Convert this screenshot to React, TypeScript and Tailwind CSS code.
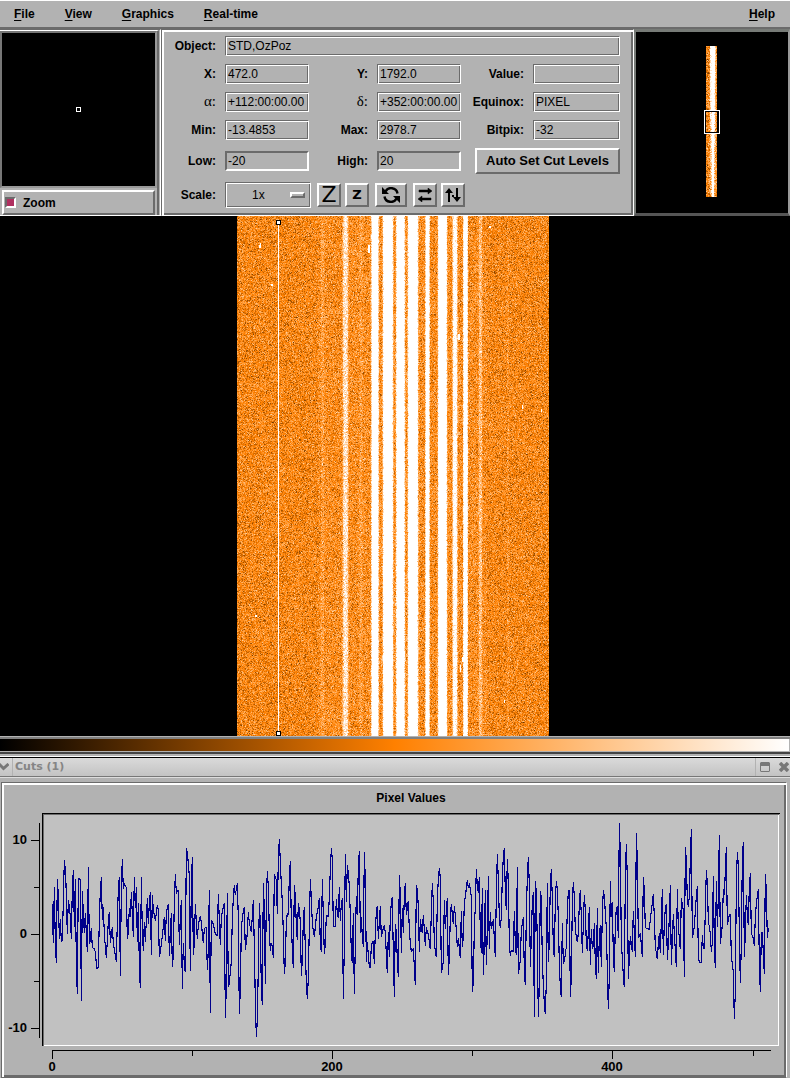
import { useLayoutEffect, useRef, type ReactNode } from "react";

// Motif style bevels
const GROOVE =
  "border border-t-[#6b6b6b] border-l-[#6b6b6b] border-b-white border-r-white shadow-[inset_1px_1px_0_#fff,inset_-1px_-1px_0_#6b6b6b]";
const SUNKEN = "border-2 border-t-[#6b6b6b] border-l-[#6b6b6b] border-b-white border-r-white";
const RAISED = "border-2 border-t-white border-l-white border-b-[#6b6b6b] border-r-[#6b6b6b]";

// center, half width and peak of every spectrum on the detector
const FIBRES = [
  [85.5, 1.5, 3],
  [108.5, 2.5, 15],
  [124, 1.5, 3],
  [138, 3, 45],
  [151, 4, 60],
  [163.5, 3.5, 50],
  [176, 4, 60],
  [190.5, 1.7, 45],
  [205.5, 3.5, 60],
  [218, 2.2, 22],
  [228.5, 1.7, 60],
  [243.5, 1.6, 8],
  [271, 1, 2],
];

// x, y, width, height
const COSMIC_RAYS = [
  [22, 29, 2, 3],
  [23, 27, 1, 3],
  [131, 29, 2, 8],
  [34, 68, 2, 2],
  [252, 10, 2, 2],
  [221, 118, 2, 6],
  [285, 189, 1, 4],
  [304, 193, 1, 3],
  [18, 399, 2, 2],
  [225, 441, 2, 5],
  [223, 449, 1, 7],
  [267, 484, 1, 3],
];

const makeRandom = (seed: number) => () => {
  seed = (seed * 1664525 + 1013904223) >>> 0;
  return seed / 4294967296;
};

const gauss = (random: () => number) => random() + random() + random() + random() - 2;

// Heat map, cut levels -20..20
const heat = (value: number) => {
  const t = Math.min(1, Math.max(0, (value + 20) / 40));
  if (t < 0.5) return [t * 510, t * 256, 0];
  return [255, 128 + (t - 0.5) * 254, (t - 0.5) * 510];
};

const paint = (
  ctx: CanvasRenderingContext2D,
  width: number,
  height: number,
  valueAt: (x: number, y: number) => number
) => {
  const image = ctx.createImageData(width, height);
  for (let y = 0; y < height; y++) {
    for (let x = 0; x < width; x++) {
      const [r, g, b] = heat(valueAt(x, y));
      image.data.set([r, g, b, 255], (y * width + x) * 4);
    }
  }
  ctx.putImageData(image, 0, 0);
};

const DetectorImage = () => {
  const ref = useRef<HTMLCanvasElement>(null);

  useLayoutEffect(() => {
    const ctx = ref.current?.getContext("2d");
    if (!ctx) return;
    const random = makeRandom(472);
    const profile = Array.from({ length: 312 }, (_, x) =>
      FIBRES.reduce((sum, [c, w, peak]) => sum + peak * Math.exp(-0.7 * (Math.abs(x + 0.5 - c) / w) ** 4), 0)
    );
    paint(ctx, 312, 520, (x) => {
      const sky = x > 80 && x < 250 ? 2 : 1;
      return sky + gauss(random) * 7 + profile[x] * (0.8 + random() * 0.4);
    });

    ctx.fillStyle = "#fff";
    COSMIC_RAYS.forEach(([x, y, w, h]) => ctx.fillRect(x, y, w, h));

    // Cut line with its two handles
    ctx.fillRect(41, 7, 1, 510);
    [4, 515].forEach((y) => {
      ctx.fillStyle = "#000";
      ctx.fillRect(39, y, 5, 5);
      ctx.fillStyle = "#fff";
      ctx.fillRect(40, y + 1, 3, 3);
    });
  }, []);

  return <canvas ref={ref} width={312} height={520} className="block" />;
};

const PanImage = () => {
  const ref = useRef<HTMLCanvasElement>(null);

  useLayoutEffect(() => {
    const ctx = ref.current?.getContext("2d");
    if (!ctx) return;
    const random = makeRandom(1792);
    paint(ctx, 11, 151, (x, y) => {
      const fade = y / 151;
      const bright = [0, 0, 0, 2, 20 - fade * 15, 24 - fade * 14, 40, 40, 26 - fade * 18, 9 - fade * 5, 2];
      return 1 + bright[x] + gauss(random) * 8;
    });
  }, []);

  return <canvas ref={ref} width={11} height={151} className="block" />;
};

interface FieldProps {
  id: string;
  label: string;
  value: string;
  editable?: boolean;
  greek?: boolean;
  wide?: boolean;
}

const Field = ({ id, label, value, editable, greek, wide }: FieldProps) => (
  <>
    <label
      htmlFor={id}
      className={greek ? "text-right font-['Liberation_Serif',serif] text-[15px]" : "text-right font-bold"}
    >
      {label}
    </label>
    <input
      id={id}
      defaultValue={value}
      readOnly={!editable}
      className={`h-5 w-full min-w-0 bg-[#b2b2b2] outline-none ${editable ? `${SUNKEN} px-px` : `${GROOVE} px-0.5`} ${
        wide ? "col-span-5" : ""
      }`}
    />
  </>
);

const ToolButton = ({ title, className, children }: { title: string; className: string; children: ReactNode }) => (
  <button
    type="button"
    aria-label={title}
    className={`flex h-6 items-center justify-center bg-[#b2b2b2] ${RAISED} ${className}`}
  >
    {children}
  </button>
);

const MenuButton = ({ label }: { label: string }) => (
  <button type="button" className="font-bold">
    <span className="underline decoration-1 underline-offset-2">{label[0]}</span>
    {label.slice(1)}
  </button>
);

// Cut trace at three units per screen pixel, in pieces that join end to end
const TRACE = [
  {
    start: 0,
    points:
      "157,312 158,368 160,428 163,262 166,430 169,488 172,238 175,285 178,418 181,358 184,424 187,420 190,300 193,181 197,220 199,290 202,403 205,300 208,320 211,350 214,418 217,265 220,211 223,380 226,238 229,495 232,583 235,235 241,238 244,604 247,273 250,338 253,398 256,340 259,398 262,455 265,202 268,433 271,420 274,385 277,443 283,447 286,455 290,505 295,503 298,355 301,275 304,232 307,360 310,320 313,403 319,475 325,365 328,335 331,430 337,380 340,430 349,485 352,365 355,265 358,230 361,529 364,265 367,176 370,268 373,248 376,260 379,262 382,418 385,395 388,325 391,350 394,277 397,345 400,410 403,232 406,325 409,262 412,425 415,308 418,500 421,565 424,232 427,395 430,452 433,367 436,425 442,295 445,373 448,308 451,277 454,466 457,286 460,330 466,362 472,316 475,330 478,472 484,435 490,380 493,350 496,424 499,340 502,322 505,313 508,468 514,338 517,500 520,465 523,303 526,223 529,280 535,270 538,436 541,360 544,300 547,568 550,428 553,495 556,517 559,145 562,160 565,190 568,230 571,514 574,256 577,170 580,466 583,430 586,313 592,418 595,375 601,347 604,370 610,430 613,385 619,382 622,511 625,450 628,270 631,640 634,360 640,372 646,403 652,406 655,283 661,436 664,350 670,320 673,308 676,655 679,560 682,280 685,562 688,548 694,485 697,355 700,293 703,256 706,285 712,250 715,355 718,643 721,570 724,383 727,355 730,335 733,322 736,451 742,400 745,337 748,368 754,397 760,300 763,440 766,600 769,712 772,660 775,500 778,308 781,370 784,568 787,616 790,250 793,328 796,553 799,300 802,214 805,260 808,395 811,452 814,428 817,440 820,475 823,223 826,232 829,240 832,343 835,175 838,118",
  },
  {
    start: 780,
    points:
      "58,118 61,183 64,255 67,305 70,395 73,523 76,487 79,365 82,340 85,345 88,228 91,184 94,368 97,448 100,505 103,256 106,290 109,375 112,420 115,310 118,330 121,365 124,529 127,480 130,362 133,322 136,452 139,548 142,596 145,532 148,380 151,238 154,293 157,372 163,410 166,380 169,350 175,320 178,295 181,440 184,455 187,238 190,345 193,463 196,430 199,345 205,352 208,290 211,210 214,145 217,180 220,380 226,378 229,298 232,340 235,355 238,260 241,362 244,310 247,295 250,596 253,440 256,163 259,305 262,196 265,218 268,260 271,345 274,455 277,490 280,340 283,583 286,435 289,287 292,345 295,200 298,154 301,400 304,350 307,412 310,440 313,157 316,240 319,487 322,427 328,500 331,505 334,435 340,422 343,493 346,395 349,335 352,317 355,418 361,317 364,412 367,395 373,376 376,400 379,460 382,520 385,395 388,470 391,345 394,310 397,290 400,460 403,590 406,373 409,395 412,480 415,532 418,226 421,283 424,458 427,325 430,398 433,290 436,250 439,345 445,302 448,390 451,430 454,455 460,445 466,556 469,256 472,270 475,320 478,457 481,358 487,400 490,344 496,437 499,382 505,405 511,448 514,335 517,250 520,305 523,430 529,472 532,300 535,235 538,205 541,235 544,520 550,485 553,300 556,388 559,330 562,295 565,526 568,470 571,350 574,313 580,373 583,319 586,345 592,440 595,415 601,475 604,332 607,440 610,410 613,310 616,290 622,240 625,265 628,250 634,290 637,577 640,548 643,380 646,320 649,208 652,255 655,280 658,232 661,400 664,458 667,265 670,526 673,425 676,270 679,494 682,400 685,229 688,448 691,335 694,388 700,358 703,415 706,472 709,280 712,163 715,240 718,350 721,385 724,350 727,235 730,170 733,145 736,280 739,330 742,178 745,245 748,425 751,468 754,450 760,457 763,332 766,430 769,466 772,202 775,523 781,480 784,390 790,352 793,515 796,556 799,340 802,232 805,172",
  },
  {
    start: 1560,
    points:
      "25,172 28,255 31,502 34,412 37,305 40,277 43,650 46,244 49,278 52,430 55,650 58,553 61,274 64,292 67,480 70,555 73,610 76,643 79,545 82,250 85,487 88,425 91,250 94,208 97,295 100,440 103,472 106,300 109,244 112,265 115,350 118,495 121,560 124,592 127,370 130,490 133,485 139,440 142,330 145,275 148,271 151,592 154,530 157,310 160,247 163,290 166,390 172,427 175,400 178,310 181,271 184,350 187,458 190,375 193,286 196,330 199,430 202,452 205,395 208,322 211,496 214,388 217,445 220,440 223,370 226,490 229,538 232,325 235,518 238,412 241,374 244,502 247,335 250,271 253,290 259,385 262,510 265,626 268,528 271,244 274,350 277,305 280,464 283,517 286,380 289,322 292,320 295,415 298,70 301,160 304,425 310,527 313,562 316,235 319,133 322,235 325,538 328,475 331,408 337,455 340,332 343,400 346,470 349,100 352,180 355,415 361,400 367,470 370,232 373,270 376,383 388,388 391,358 397,310 400,283 403,350 406,440 412,478 415,430 418,400 421,460 427,268 430,466 433,370 436,325 439,313 442,480 445,430 448,350 451,256 454,494 460,343 463,400 469,502 472,268 475,380 481,448 484,295 490,330 493,532 496,142 499,178 502,300 505,320 508,290 511,178 514,88 517,415 523,380 529,290 532,259 535,465 538,487 544,487 547,406 550,445 553,448 556,330 559,211 562,250 565,362 571,400 574,455 577,430 580,229 583,435 586,505 589,244 592,380 595,292 598,106 601,433 607,375 610,268 613,285 616,215 619,142 622,376 628,345 631,344 634,467 640,515 643,658 646,575 649,250 652,157 655,192 658,400 661,548 664,435 667,178 670,127 673,470 676,405 679,286 682,345 685,375 688,262 691,220 694,400 700,415 703,437 706,352 709,310 715,268 718,488 721,577 724,397 727,397 733,523 736,223 739,270 742,415 745,384",
  },
];

const Y_LABELS = [
  { y: 840, text: "10" },
  { y: 934, text: "0" },
  { y: 1028, text: "-10" },
];

const X_LABELS = [
  { x: 52, text: "0" },
  { x: 332, text: "200" },
  { x: 612, text: "400" },
];

const PixelPlot = () => (
  <svg
    viewBox="2 807 784 270"
    className="block w-full fill-black font-['Liberation_Sans',sans-serif] text-[13px] font-bold"
    role="img"
    aria-label="Pixel Values"
  >
    <g shapeRendering="crispEdges">
      <rect x="42" y="813" width="737" height="233" fill="#c1c1c1" />
      <path d="M43 814h736v1H44v231h-1z" fill="#6b6b6b" />
      <path d="M778 815h1v231H44v-1h734z" fill="#fff" />
      <path d="M42 813h738v1H43v232h-1z" />
      <path
        d="M39.5 823v215M31 840.5h8M34 887.5h5M31 934.5h8M34 981.5h5M31 1028.5h8M52 1050.5h719M52.5 1050v9M192.5 1050v6M332.5 1050v9M472.5 1050v6M612.5 1050v9M753.5 1050v6"
        fill="none"
        stroke="#000"
      />
      <g transform="translate(0 800) scale(0.33333)">
        {TRACE.map((piece) => (
          <polyline
            key={piece.start}
            points={piece.points}
            transform={`translate(${piece.start} 0)`}
            fill="none"
            stroke="#00008b"
            strokeWidth="3.4"
            strokeLinejoin="bevel"
          />
        ))}
      </g>
    </g>
    {Y_LABELS.map(({ y, text }) => (
      <text key={text} x="27" y={y + 4} textAnchor="end">
        {text}
      </text>
    ))}
    {X_LABELS.map(({ x, text }) => (
      <text key={text} x={x} y="1071" textAnchor="middle">
        {text}
      </text>
    ))}
  </svg>
);

export default function App() {
  return (
    <div className="w-full bg-[#b2b2b2] font-['Liberation_Sans',Arial,sans-serif] text-xs text-black">
      {/* Menu bar */}
      <nav className="flex h-[29px] items-center gap-[30px] border-t border-b-2 border-t-white border-b-[#6b6b6b] pr-[15px] pl-3.5">
        <MenuButton label="File" />
        <MenuButton label="View" />
        <MenuButton label="Graphics" />
        <MenuButton label="Real-time" />
        <div className="ml-auto flex">
          <MenuButton label="Help" />
        </div>
      </nav>

      <div className="flex">
        {/* Zoom window */}
        <section className="flex w-[161px] shrink-0 flex-col border-t border-r border-b border-t-[#6b6b6b] border-r-white border-b-white">
          <div className="mr-px flex flex-1 flex-col border-t border-r-2 border-t-white border-r-[#6b6b6b]">
            <div className="flex flex-1 items-center justify-center border-t-2 border-r-2 border-b-2 border-l-2 border-t-[#777] border-r-[#999] border-b-[#999] border-l-[#777] bg-black">
              <span className="size-[5px] border border-white" />
            </div>
            <label className={`mt-0.5 mr-0.5 ml-0.5 flex h-[25px] items-center gap-[7px] pl-px font-bold ${RAISED}`}>
              <input
                type="checkbox"
                defaultChecked
                className={`size-[11px] appearance-none bg-[#b2b2b2] checked:bg-[#b03060] ${SUNKEN}`}
              />
              Zoom
            </label>
          </div>
        </section>

        {/* Image info and cut levels */}
        <section className="grid min-w-0 flex-1 grid-cols-[53px_minmax(0,84fr)_50px_minmax(0,84fr)_54px_minmax(0,87fr)] items-center gap-x-[9px] gap-y-2 border border-t-[#6b6b6b] border-r-white border-b-white border-l-[#6b6b6b] pt-1.5 pr-[13px] pb-[7px] pl-px shadow-[inset_2px_2px_0_#fff,inset_-2px_-2px_0_#6b6b6b]">
          <Field id="object" label="Object:" value="STD,OzPoz" wide />
          <Field id="x" label="X:" value="472.0" />
          <Field id="y" label="Y:" value="1792.0" />
          <Field id="value" label="Value:" value="" />
          <Field id="alpha" label="α:" value="+112:00:00.00" greek />
          <Field id="delta" label="δ:" value="+352:00:00.00" greek />
          <Field id="equinox" label="Equinox:" value="PIXEL" />
          <Field id="min" label="Min:" value="-13.4853" />
          <Field id="max" label="Max:" value="2978.7" />
          <Field id="bitpix" label="Bitpix:" value="-32" />
          <Field id="low" label="Low:" value="-20" editable />
          <Field id="high" label="High:" value="20" editable />
          <button
            type="button"
            className={`col-span-2 ml-[5px] h-[26px] text-[13px] font-bold whitespace-nowrap ${RAISED}`}
          >
            Auto Set Cut Levels
          </button>

          <label htmlFor="scale" className="text-right font-bold">
            Scale:
          </label>
          <div className="col-span-5 flex items-center">
            <div className="relative mr-1.5">
              <select
                id="scale"
                defaultValue="1x"
                className={`block h-[26px] w-[86px] appearance-none bg-[#b2b2b2] pl-[26px] outline-none ${GROOVE}`}
              >
                <option>1x</option>
                <option>2x</option>
                <option>3x</option>
              </select>
              <span className={`pointer-events-none absolute top-2.5 right-1.5 h-1.5 w-[15px] ${RAISED}`} />
            </div>
            <ToolButton title="Zoom in" className="mr-1 w-6">
              <span className="font-['DejaVu_Sans',sans-serif] text-[22px] leading-5">Z</span>
            </ToolButton>
            <ToolButton title="Zoom out" className="mr-1.5 w-6">
              <span className="font-['DejaVu_Sans',sans-serif] text-[13px] leading-4 font-bold">Z</span>
            </ToolButton>
            <ToolButton title="Rotate" className="mr-1.5 w-8">
              <svg width="18" height="16" viewBox="0 0 18 16">
                <path d="M0 0v7h7zM18 16V9h-7z" />
                <path
                  d="M3.500 4.500C6 -.5 14.500 0 15.500 6.500M14.500 11.500C12 16.500 3.500 16 2.500 9.500"
                  fill="none"
                  stroke="#000"
                  strokeWidth="2.400"
                />
              </svg>
            </ToolButton>
            <ToolButton title="Flip X" className="mr-1 w-6">
              <svg width="14" height="14" viewBox="0 0 14 14">
                <path d="M1 2h9V0l4 3-4 3V4H1zM13 12H4v2l-4-3 4-3v2h9z" stroke="#000" strokeWidth=".5" />
              </svg>
            </ToolButton>
            <ToolButton title="Flip Y" className="w-6">
              <svg width="16" height="14" viewBox="0 0 16 14">
                <path d="M3 14V5H0l4-5 4 5H5v9zM11 0v9H8l4 5 4-5h-3V0zM7 7h2v2H7z" />
              </svg>
            </ToolButton>
          </div>
        </section>

        {/* Pan window */}
        <section className="relative flex w-[156px] shrink-0 items-center justify-center border-t-[3px] border-r-2 border-b-[3px] border-l-2 border-t-[#777b77] border-r-[#999] border-b-[#555] border-l-[#777b77] bg-black pr-px pb-0.5">
          <PanImage />
          <span className="absolute flex h-6 w-4 border border-white">
            <span className="flex-1 border border-black" />
          </span>
        </section>
      </div>

      {/* Main image */}
      <main className="flex justify-center overflow-hidden bg-black pr-1">
        <DetectorImage />
      </main>

      {/* Color bar */}
      <div className="border-t border-b-2 border-t-[#b2b2b2] border-b-[#b2b2b2]">
        <div className="border-t-2 border-b-2 border-t-[#808080] border-b-[#444]">
          <div className="h-[13px] border-r border-b border-[#b2b2b2] bg-[linear-gradient(to_right,#000,#ff8000_50%,#fff)]" />
        </div>
      </div>

      {/* Cuts window */}
      <header className="flex h-[22px] items-stretch border-t border-b border-t-white border-b-[#ddd] font-['DejaVu_Sans',sans-serif] text-[11px] font-bold text-[#858585]">
        <div className="flex flex-1 items-center border-t border-b border-t-black border-b-[#777] bg-linear-to-b from-[#dadada] to-[#c3c3c3]">
          <button type="button" aria-label="Window menu" className="flex h-full w-[13px] items-center border-r border-[#b2b2b2]">
            <svg width="9" height="8" viewBox="0 0 9 8" fill="none" stroke="#777" strokeWidth="3">
              <path d="M-1 1l4.500 4.500L8.500 1" />
            </svg>
          </button>
          <h2 className="flex-1 pl-0.5">Cuts (1)</h2>
          <button type="button" aria-label="Maximize" className="flex h-full items-center border-l border-[#b2b2b2] pl-1">
            <svg width="10" height="10" viewBox="0 0 10 10">
              <path d="M1 0h8l1 1v8l-1 1H1L0 9V1zM1 4v5h8V4z" fill="#777" fillRule="evenodd" />
            </svg>
          </button>
          <button type="button" aria-label="Close" className="ml-[9px] flex h-full items-center pr-px">
            <svg width="10" height="10" viewBox="0 0 10 10" stroke="#777" strokeWidth="3.500">
              <path d="M1 1l8 8M9 1l-8 8" />
            </svg>
          </button>
        </div>
      </header>
      <div className="pt-1 pr-[3px] pl-px">
        <section className="border border-t-[#6b6b6b] border-r-white border-b-[#6b6b6b] border-l-[#6b6b6b] pt-1.5 shadow-[inset_2px_2px_0_#fff,inset_-2px_-2px_0_#6b6b6b]">
          <h3 className="h-[18px] pl-[34px] text-center leading-[18px] font-bold">Pixel Values</h3>
          <PixelPlot />
        </section>
      </div>
    </div>
  );
}
